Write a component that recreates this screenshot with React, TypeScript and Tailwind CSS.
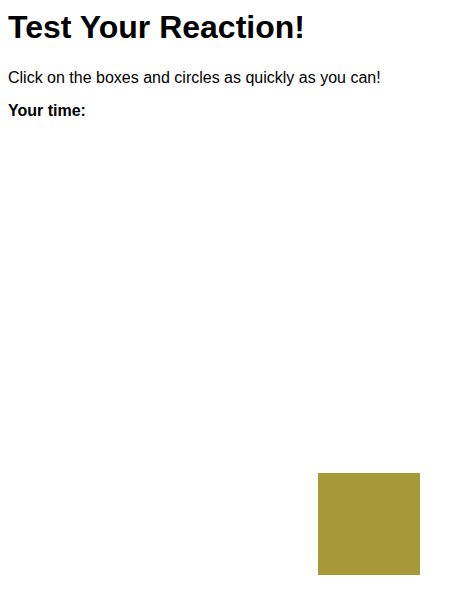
export default function App() {
  return (
    <div className="relative min-h-[591px] bg-white px-2 pt-[9px] font-['Liberation_Sans',Arial,sans-serif] text-black">
      <h1 className="mb-[23px] text-[32px] font-bold leading-[normal]">Test Your Reaction!</h1>
      <p className="mb-[15px] text-base leading-[normal]">Click on the boxes and circles as quickly as you can!</p>
      <p className="text-base font-bold leading-[normal]">
        Your time: <span id="timeTaken"></span>
      </p>
      <div className="absolute left-[318px] top-[473px] h-[102px] w-[102px] cursor-pointer bg-[#a59a37]" />
    </div>
  );
}
